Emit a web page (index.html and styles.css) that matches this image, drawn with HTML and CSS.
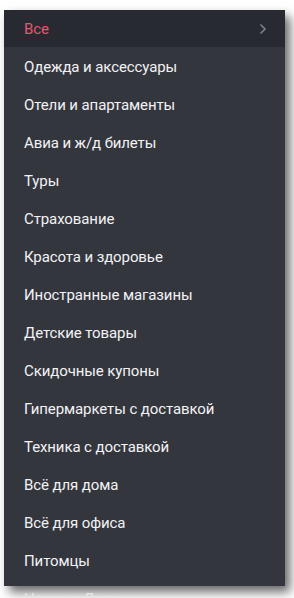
FILE: index.html
```html
<!DOCTYPE html>
<html lang="ru">
<head>
  <meta charset="UTF-8">
  <meta name="viewport" content="width=device-width, initial-scale=1.0">
  <title>Категории</title>
  <link rel="stylesheet" href="styles.css">
</head>
<body>
  <nav class="menu">
    <ul class="menu-list">
      <li class="menu-item active">
        <span>Все</span>
        <svg class="chevron" width="8" height="12" viewBox="0 0 8 12"><path d="M1.5 1.5 L6 6 L1.5 10.5" fill="none" stroke="currentColor" stroke-width="1.6"/></svg>
      </li>
      <li class="menu-item">Одежда и аксессуары</li>
      <li class="menu-item">Отели и апартаменты</li>
      <li class="menu-item">Авиа и ж/д билеты</li>
      <li class="menu-item">Туры</li>
      <li class="menu-item">Страхование</li>
      <li class="menu-item">Красота и здоровье</li>
      <li class="menu-item">Иностранные магазины</li>
      <li class="menu-item">Детские товары</li>
      <li class="menu-item">Скидочные купоны</li>
      <li class="menu-item">Гипермаркеты с доставкой</li>
      <li class="menu-item">Техника с доставкой</li>
      <li class="menu-item">Всё для дома</li>
      <li class="menu-item">Всё для офиса</li>
      <li class="menu-item">Питомцы</li>
    </ul>
    <div class="menu-more">Ночные Дела</div>
  </nav>
</body>
</html>
```

FILE: styles.css
```css
* {
  margin: 0;
  padding: 0;
  box-sizing: border-box;
}

body {
  background-color: #fff;
  font-family: Roboto, 'Noto Sans', sans-serif;
  padding: 10px 9px 0 4px;
  overflow: hidden;
  height: 598px;
}

.menu {
  width: 281px;
}

.menu-list {
  list-style: none;
  background-color: #34363e;
  box-shadow: 5px 6px 10px rgba(0, 0, 0, 0.6);
  padding-bottom: 6px;
}

.menu-item {
  display: flex;
  align-items: center;
  justify-content: space-between;
  height: 38px;
  padding: 0 18px 0 20px;
  color: #f2f2f4;
  font-size: 15px;
  letter-spacing: -0.1px;
}

.menu-item.active {
  background-color: #282a31;
  color: #e4566d;
  height: 37px;
  margin-bottom: 1px;
}

.chevron {
  color: #7d8089;
}

.menu-more {
  padding: 3px 20px 0;
  color: #e6e6e8;
  font-size: 15px;
  line-height: 20px;
}
```
